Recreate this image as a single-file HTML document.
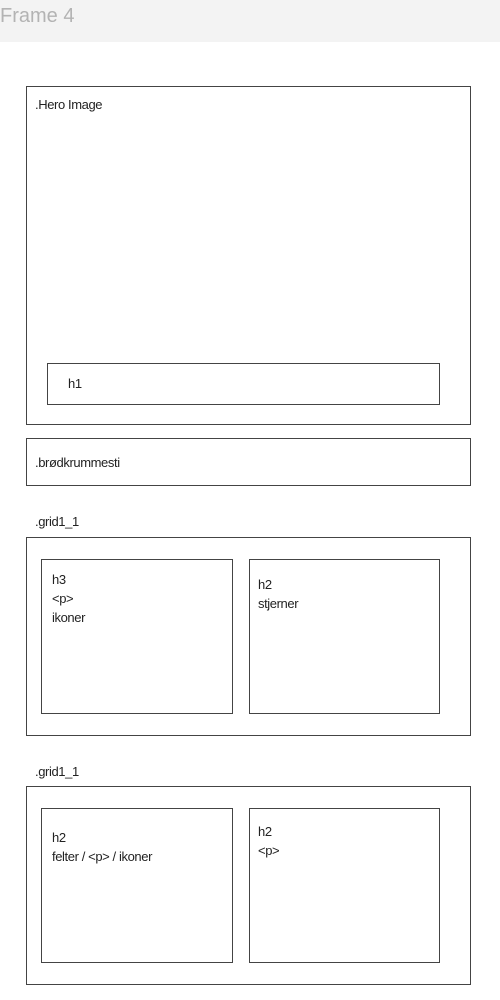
<!DOCTYPE html>
<html><head><meta charset="utf-8"><style>
body{margin:0;width:500px;height:1000px;background:#fff;position:relative;overflow:hidden;font-family:"Liberation Sans Narrow","Liberation Sans",sans-serif;font-size:13px;color:#222}
.hd{position:absolute;left:0;top:0;width:500px;height:42px;background:#f3f3f3}
.hd span{position:absolute;left:0;top:5px;font-family:"Liberation Sans",sans-serif;font-size:20px;color:#b3b3b3}
.b{position:absolute;border:1px solid #444;box-sizing:border-box}
.t{position:absolute;line-height:19px;letter-spacing:-0.4px}
</style></head><body>
<div class="hd"><span>Frame 4</span></div>
<div class="b" style="left:26px;top:86px;width:445px;height:339px"></div>
<div class="t" style="left:35px;top:95px">.Hero Image</div>
<div class="b" style="left:47px;top:363px;width:393px;height:42px"></div>
<div class="t" style="left:68px;top:374px">h1</div>
<div class="b" style="left:26px;top:438px;width:445px;height:48px"></div>
<div class="t" style="left:35px;top:453px">.brødkrummesti</div>
<div class="t" style="left:35px;top:512px">.grid1_1</div>
<div class="b" style="left:26px;top:537px;width:445px;height:199px"></div>
<div class="b" style="left:41px;top:559px;width:192px;height:155px"></div>
<div class="t" style="left:52px;top:570px">h3<br>&lt;p&gt;<br>ikoner</div>
<div class="b" style="left:249px;top:559px;width:191px;height:155px"></div>
<div class="t" style="left:258px;top:575px">h2<br>stjerner</div>
<div class="t" style="left:35px;top:762px">.grid1_1</div>
<div class="b" style="left:26px;top:786px;width:445px;height:199px"></div>
<div class="b" style="left:41px;top:808px;width:192px;height:155px"></div>
<div class="t" style="left:52px;top:828px">h2<br>felter / &lt;p&gt; / ikoner</div>
<div class="b" style="left:249px;top:808px;width:191px;height:155px"></div>
<div class="t" style="left:258px;top:822px">h2<br>&lt;p&gt;</div>
</body></html>
